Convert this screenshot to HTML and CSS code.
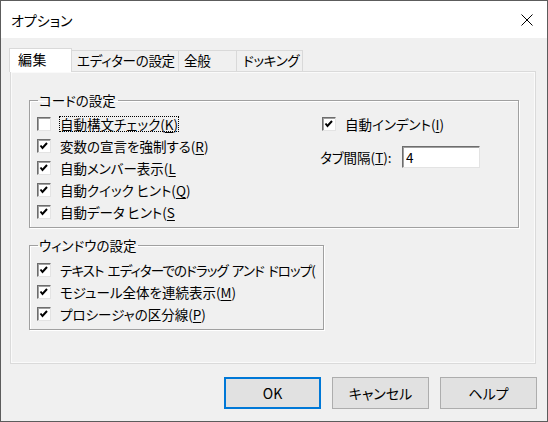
FILE: index.html
```html
<!DOCTYPE html>
<html lang="ja">
<head>
  <meta charset="UTF-8" />
  <title>オプション</title>
  <link rel="stylesheet" href="styles.css">
</head>
<body>
  <div class="window">
    <div class="titlebar">
      <span class="title">オプション</span>
      <button class="close" title="閉じる">
        <svg width="12" height="12" viewBox="0 0 12 12"><path d="M0.5 0.5 L11.5 11.5 M11.5 0.5 L0.5 11.5" stroke="#000" stroke-width="1" fill="none"/></svg>
      </button>
    </div>

    <div class="client">
      <div class="tabs">
        <div class="tab active">編集</div>
        <div class="tab">エディターの設定</div>
        <div class="tab">全般</div>
        <div class="tab">ドッキング</div>
      </div>

      <div class="page">
        <fieldset class="group code-group">
          <legend>コードの設定</legend>
          <div class="cols">
            <div class="col">
              <label class="row"><span class="box"></span><span class="text focus">自動構文チェック(<u>K</u>)</span></label>
              <label class="row"><span class="box checked"></span><span class="text">変数の宣言を強制する(<u>R</u>)</span></label>
              <label class="row"><span class="box checked"></span><span class="text">自動メンバー表示(<u>L</u></span></label>
              <label class="row"><span class="box checked"></span><span class="text">自動クイック ヒント(<u>Q</u>)</span></label>
              <label class="row"><span class="box checked"></span><span class="text">自動データ ヒント(<u>S</u></span></label>
            </div>
            <div class="col right">
              <label class="row indent"><span class="box checked"></span><span class="text">自動インデント(<u>I</u>)</span></label>
              <div class="tabwidth">
                <span>タブ間隔(<u>T</u>):</span>
                <input type="text" value="4" />
              </div>
            </div>
          </div>
        </fieldset>

        <fieldset class="group window-group">
          <legend>ウィンドウの設定</legend>
          <label class="row"><span class="box checked"></span><span class="text long">テキスト エディターでのドラッグ アンド ドロップ(</span></label>
          <label class="row"><span class="box checked"></span><span class="text">モジュール全体を連続表示(<u>M</u>)</span></label>
          <label class="row"><span class="box checked"></span><span class="text">プロシージャの区分線(<u>P</u>)</span></label>
        </fieldset>
      </div>

      <div class="buttons">
        <button class="btn default">OK</button>
        <button class="btn">キャンセル</button>
        <button class="btn">ヘルプ</button>
      </div>
    </div>
  </div>
</body>
</html>
```

FILE: styles.css
```css
* { box-sizing: border-box; }
body {
  margin: 0;
  font-family: "Noto Sans CJK JP", sans-serif;
  font-size: 13.5px;
  font-feature-settings: "palt";
  color: #000;
  background: #fff;
}

.window {
  width: 548px;
  height: 422px;
  border: 1px solid #5c5c5c;
  background: #f0f0f0;
  display: flex;
  flex-direction: column;
}

/* タイトルバー */
.titlebar {
  height: 37px;
  background: #fff;
  display: flex;
  align-items: center;
  justify-content: space-between;
  padding: 0 14px 0 10px;
}
.title { font-size: 14px; line-height: 1; margin-top: 1px; }
.close {
  background: none;
  border: none;
  padding: 0;
  display: flex;
  cursor: pointer;
}

.client {
  flex: 1;
  padding: 10px 10px 0 9px;
  display: flex;
  flex-direction: column;
}

/* タブ */
.tabs {
  display: flex;
  align-items: flex-end;
  height: 23px;
  margin-left: -1px;
}
.tab {
  height: 21px;
  line-height: 19px;
  padding: 0 0 0 5px;
  border: 1px solid #d9d9d9;
  border-bottom: none;
  border-left: none;
  background: #f0f0f0;
  white-space: nowrap;
  overflow: hidden;
  letter-spacing: -0.3px;
}
.tab:nth-child(2) { width: 107px; }
.tab:nth-child(3) { width: 58px; }
.tab:nth-child(4) { width: 66px; padding-left: 6px; }
.tab.active {
  width: 63px;
  height: 24px;
  line-height: 21px;
  margin-bottom: -1px;
  padding-left: 8px;
  font-size: 14px;
  letter-spacing: 0.5px;
  background: #fff;
  border-left: 1px solid #d9d9d9;
  position: relative;
  z-index: 1;
}

.page {
  height: 293px;
  width: 526px;
  border: 1px solid #dadada;
  box-shadow: inset 0 0 0 1px #fafafa;
  padding: 20px 0 0 18px;
}

/* グループボックス */
.group {
  margin: 0;
  min-width: 0;
  border: 1px solid #a0a0a0;
  box-shadow: inset 1px 1px 0 #fff, 1px 1px 0 #fff;
  padding: 0 0 4px 7px;
}
.group legend {
  padding: 0 2px 0 1px;
  margin-left: 1px;
  line-height: 16px;
}
.code-group { width: 490px; padding-top: 5px; }
.window-group { width: 295px; margin-top: 9px; padding-top: 6px; }

.cols { display: grid; grid-template-columns: 283px auto; }

.row {
  display: flex;
  align-items: center;
  height: 22px;
  gap: 9px;
  white-space: nowrap;
  overflow: hidden;
}
.row u { text-decoration-thickness: 1px; text-underline-offset: 2px; }
.text { line-height: 16px; padding: 0 1px; margin-left: -1px; }
.text.long { letter-spacing: -0.9px; word-spacing: 2px; }
.text.focus { outline: 1px dotted #000; outline-offset: -1px; }

.box {
  width: 14px;
  height: 14px;
  flex: none;
  background: #fff;
  border: 1px solid;
  border-color: #6d6d6d #e3e3e3 #e3e3e3 #6d6d6d;
  box-shadow: inset 1px 1px 0 #a0a0a0;
}
.box.checked {
  background: #fff url("data:image/svg+xml,%3Csvg xmlns='http://www.w3.org/2000/svg' width='12' height='12'%3E%3Cpath d='M2.5 5.5 L4.5 8 L9 3' stroke='%23000' stroke-width='2' fill='none'/%3E%3C/svg%3E") no-repeat 0 0;
}

.right .indent { margin-left: 2px; }
.tabwidth {
  display: grid;
  grid-template-columns: 82px 78px;
  align-items: center;
  margin-top: 11px;
}
.tabwidth input {
  width: 78px;
  height: 22px;
  font: inherit;
  padding: 0 3px;
  border: 1px solid;
  border-color: #6d6d6d #e3e3e3 #e3e3e3 #6d6d6d;
  box-shadow: inset 1px 1px 0 #a0a0a0;
  background: #fff;
}

/* ボタン */
.buttons {
  display: flex;
  justify-content: flex-end;
  gap: 11px;
  margin-top: 13px;
}
.btn {
  width: 97px;
  height: 32px;
  font: inherit;
  font-size: 14px;
  background: #e1e1e1;
  border: 1px solid #adadad;
  cursor: pointer;
}
.btn.default { border: 2px solid #0078d7; }
```
